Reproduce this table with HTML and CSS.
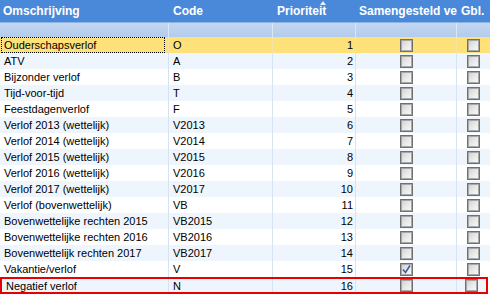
FILE: index.html
```html
<!DOCTYPE html>
<html lang="nl">
<head>
<meta charset="utf-8">
<title>Verlofsoorten</title>
<link rel="stylesheet" href="styles.css">
</head>
<body>
<div class="grid">
  <div class="row head">
    <div class="cell">Omschrijving</div>
    <div class="cell">Code</div>
    <div class="cell sorted">Prioriteit<span class="sort"></span></div>
    <div class="cell">Samengesteld verlof</div>
    <div class="cell">Gbl.</div>
  </div>
  <div class="row filter">
    <div class="cell"></div><div class="cell"></div><div class="cell"></div><div class="cell"></div><div class="cell"></div>
  </div>
  <div class="row sel"><div class="cell"><span class="focus">Ouderschapsverlof</span></div><div class="cell">O</div><div class="cell num">1</div><div class="cell cb"><span class="box"></span></div><div class="cell cb"><span class="box"></span></div></div>
  <div class="row alt"><div class="cell">ATV</div><div class="cell">A</div><div class="cell num">2</div><div class="cell cb"><span class="box"></span></div><div class="cell cb"><span class="box"></span></div></div>
  <div class="row"><div class="cell">Bijzonder verlof</div><div class="cell">B</div><div class="cell num">3</div><div class="cell cb"><span class="box"></span></div><div class="cell cb"><span class="box"></span></div></div>
  <div class="row alt"><div class="cell">Tijd-voor-tijd</div><div class="cell">T</div><div class="cell num">4</div><div class="cell cb"><span class="box"></span></div><div class="cell cb"><span class="box"></span></div></div>
  <div class="row"><div class="cell">Feestdagenverlof</div><div class="cell">F</div><div class="cell num">5</div><div class="cell cb"><span class="box"></span></div><div class="cell cb"><span class="box"></span></div></div>
  <div class="row alt"><div class="cell">Verlof 2013 (wettelijk)</div><div class="cell">V2013</div><div class="cell num">6</div><div class="cell cb"><span class="box"></span></div><div class="cell cb"><span class="box"></span></div></div>
  <div class="row"><div class="cell">Verlof 2014 (wettelijk)</div><div class="cell">V2014</div><div class="cell num">7</div><div class="cell cb"><span class="box"></span></div><div class="cell cb"><span class="box"></span></div></div>
  <div class="row alt"><div class="cell">Verlof 2015 (wettelijk)</div><div class="cell">V2015</div><div class="cell num">8</div><div class="cell cb"><span class="box"></span></div><div class="cell cb"><span class="box"></span></div></div>
  <div class="row"><div class="cell">Verlof 2016 (wettelijk)</div><div class="cell">V2016</div><div class="cell num">9</div><div class="cell cb"><span class="box"></span></div><div class="cell cb"><span class="box"></span></div></div>
  <div class="row alt"><div class="cell">Verlof 2017 (wettelijk)</div><div class="cell">V2017</div><div class="cell num">10</div><div class="cell cb"><span class="box"></span></div><div class="cell cb"><span class="box"></span></div></div>
  <div class="row"><div class="cell">Verlof (bovenwettelijk)</div><div class="cell">VB</div><div class="cell num">11</div><div class="cell cb"><span class="box"></span></div><div class="cell cb"><span class="box"></span></div></div>
  <div class="row alt"><div class="cell">Bovenwettelijke rechten 2015</div><div class="cell">VB2015</div><div class="cell num">12</div><div class="cell cb"><span class="box"></span></div><div class="cell cb"><span class="box"></span></div></div>
  <div class="row"><div class="cell">Bovenwettelijke rechten 2016</div><div class="cell">VB2016</div><div class="cell num">13</div><div class="cell cb"><span class="box"></span></div><div class="cell cb"><span class="box"></span></div></div>
  <div class="row alt"><div class="cell">Bovenwettelijk rechten 2017</div><div class="cell">VB2017</div><div class="cell num">14</div><div class="cell cb"><span class="box"></span></div><div class="cell cb"><span class="box"></span></div></div>
  <div class="row"><div class="cell">Vakantie/verlof</div><div class="cell">V</div><div class="cell num">15</div><div class="cell cb"><span class="box checked"><svg width="9" height="9" viewBox="0 0 9 9"><path d="M1 4.5 L3.5 7.5 L8 0.5" fill="none" stroke="#3b5ea6" stroke-width="1.6"/></svg></span></div><div class="cell cb"><span class="box"></span></div></div>
  <div class="row alt marked"><div class="cell">Negatief verlof</div><div class="cell">N</div><div class="cell num">16</div><div class="cell cb"><span class="box"></span></div><div class="cell cb"><span class="box"></span></div></div>
</div>
</body>
</html>
```

FILE: styles.css
```css
html, body {
  margin: 0;
  padding: 0;
  background: #ffffff;
}
body {
  font-family: "Liberation Sans", Arial, sans-serif;
  font-size: 11px;
  color: #000000;
}
.grid {
  width: 490px;
  height: 295px;
  overflow: hidden;
  background: #ffffff;
}
.row {
  display: grid;
  grid-template-columns: 169px 104px 83px 101px 1fr;
  height: 16px;
  background: #ffffff;
}
.cell {
  box-sizing: border-box;
  border-right: 1px solid #d6e3f2;
  padding: 1px 3px 0 4px;
  line-height: 15px;
  white-space: nowrap;
  overflow: hidden;
}
.cell:last-child {
  border-right: none;
}
.row.alt {
  background: #eef5fc;
}
.row.sel {
  background: #ffe17a;
}
.row.sel .cell {
  border-right-color: #f3e3a6;
}
.row.head {
  height: 22px;
  background: #4a89da;
  color: #ffffff;
  font-weight: bold;
  font-size: 12px;
}
.row.head .cell {
  border-right: none;
  line-height: 22px;
  padding: 0 2px 0 4px;
  position: relative;
  text-overflow: clip;
}
.row.head .cell:first-child {
  padding-left: 3px;
}
.row.head .cell:nth-child(4) {
  padding-left: 3px;
}
.sort {
  position: absolute;
  left: 47px;
  top: 1px;
  width: 0;
  height: 0;
  border-left: 3px solid transparent;
  border-right: 3px solid transparent;
  border-bottom: 4px solid #e8f0fb;
}
.row.filter {
  height: 15px;
  background: linear-gradient(#c3d7f1, #b3cced);
  border-top: 1px solid #8fb3e4;
  box-sizing: border-box;
}
.row.filter .cell {
  border-right: 1px solid #dbe7f7;
}
.row.filter .cell:last-child {
  border-right: none;
}
.cell:first-child {
  padding-left: 4px;
}
.num {
  text-align: right;
  padding-right: 2px;
}
.cb {
  display: flex;
  justify-content: center;
  align-items: center;
  padding: 0;
}
.box {
  box-sizing: border-box;
  width: 13px;
  height: 13px;
  border: 1px solid #707070;
  box-shadow: inset 0 0 0 1px #a8a8a8;
  background: linear-gradient(135deg, #cdcdcd 0%, #e8e8e8 50%, #fbfbfb 100%);
  display: flex;
  align-items: center;
  justify-content: center;
}
.focus {
  display: block;
  margin: -1px 0 0 -3px;
  padding: 0 0 0 2px;
  height: 14px;
  border: 1px dotted #000000;
  line-height: 15px;
}
.row.marked {
  box-sizing: border-box;
  height: 17px;
  border: 2px solid #e80000;
  width: 488px;
  grid-template-columns: 167px 104px 83px 101px 1fr;
}
.row.marked .cell {
  line-height: 13px;
}
.row.marked .cb {
  align-items: flex-start;
}
```
